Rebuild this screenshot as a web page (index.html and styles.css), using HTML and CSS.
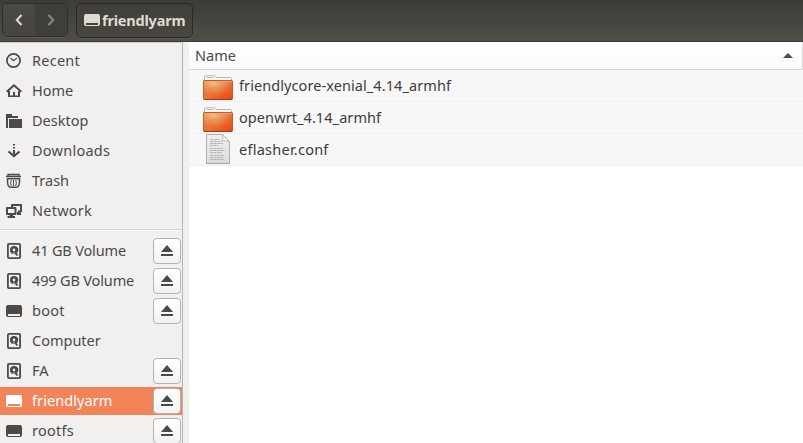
FILE: index.html
```html
<!DOCTYPE html>
<html lang="en">
<head>
<meta charset="utf-8">
<title>friendlyarm</title>
<link rel="stylesheet" href="styles.css">
</head>
<body>
<svg class="defs" aria-hidden="true">
  <defs>
    <linearGradient id="orange" x1="0" y1="0" x2="1" y2="1"><stop offset="0" stop-color="#d98743"/><stop offset=".5" stop-color="#e87436"/><stop offset="1" stop-color="#e64413"/></linearGradient>
    <radialGradient id="shine" cx=".35" cy=".1" r=".65"><stop offset="0" stop-color="#f0c488"/><stop offset="1" stop-color="#eca060" stop-opacity="0"/></radialGradient>
    <linearGradient id="paper" x1="0" y1="0" x2="0" y2="1"><stop offset="0" stop-color="#f0f0f0"/><stop offset="1" stop-color="#dcdcdc"/></linearGradient>
  </defs>
  <symbol id="recent" viewBox="0 0 16 16"><circle cx="7.5" cy="7.5" r="6.6" fill="none" stroke="currentColor" stroke-width="1.7"/><path d="M4.5 5l3 2.8L11 5" fill="none" stroke="currentColor" stroke-width="1.2"/></symbol>
  <symbol id="home" viewBox="0 0 16 16"><path d="M.7 8.7L8 2.2l7.3 6.5" fill="none" stroke="currentColor" stroke-width="1.9"/><path d="M2 8h2v4.5h3V9h2v3.500h3V8h2v6H2z" fill="currentColor"/></symbol>
  <symbol id="desktop" viewBox="0 0 16 16"><path d="M0 1h6v2h6v2H2v10H0zM3 6h13v9H3z" fill="currentColor"/></symbol>
  <symbol id="downloads" viewBox="0 0 16 16"><path d="M7 1h2v1.500H7zM7 4h2v1.500H7zM7 7h2v4.500H7z" fill="currentColor"/><path d="M2.500 8.500l5.500 4.500 5.500-4.500" fill="none" stroke="currentColor" stroke-width="2.200"/></symbol>
  <symbol id="trash" viewBox="0 0 16 16"><path d="M2 3.500V1.500h11v2M0 3.500h15" fill="none" stroke="currentColor" stroke-width="1.400"/><path d="M1 5.700h13M1.500 5.500v3.500q.2 5 3 5.300h6q2.800-.3 3-5.300V5.500" fill="none" stroke="currentColor" stroke-width="1.500"/><path d="M5.300 7q-1.300 3 0 6M9.700 7q1.300 3 0 6M7.500 7v6" fill="none" stroke="currentColor" stroke-width="1"/></symbol>
  <symbol id="network" viewBox="0 0 16 16"><path d="M6 4V1.900h9v6.500h-3M1 5h8.500v6H1z" fill="none" stroke="currentColor" stroke-width="2" stroke-linejoin="round"/><path d="M3.500 11h3.500v2h2v2H1.500v-2h2zM11 9h3v1h1v2h-4z" fill="currentColor"/></symbol>
  <symbol id="disk" viewBox="0 0 16 16"><rect x="1.900" y=".9" width="12.200" height="14.200" rx="1" fill="none" stroke="currentColor" stroke-width="1.800"/><path fill-rule="evenodd" d="M8 3a4 4 0 1 0 0 8l-.8-2h.8l2 2 1.500-1.500A4 4 0 0 0 8 3zM8 5.600a1.300 1.300 0 1 0 0 2.600 1.300 1.300 0 0 0 0-2.600z" fill="currentColor"/><path d="M8.800 9.300l2.700 3.200" stroke="currentColor" stroke-width="1.900"/></symbol>
  <symbol id="drive" viewBox="0 0 16 16"><path fill-rule="evenodd" d="M2 2h12q2 0 2 2v8q0 2-2 2H2q-2 0-2-2V4q0-2 2-2zM2 11v2h12v-2z" fill="currentColor"/></symbol>
  <symbol id="eject" viewBox="0 0 12 12"><path d="M6 0l6 7H0zM0 9h12v2H0z" fill="currentColor"/></symbol>
  <symbol id="folder" viewBox="0 0 30 25"><path d="M1.500 7V1.500q0-.8 1-.8h9q.8 0 1.500 1.800h14.500q1 0 1 1V7" fill="#f8f8f8" stroke="#b9b9b9"/><path d="M3.500 2.500h7" stroke="#f3a474"/><rect x=".5" y="5.500" width="29" height="19" rx=".7" fill="url(#orange)"/><rect x=".5" y="5.500" width="29" height="19" rx=".7" fill="url(#shine)" stroke="#c85a2c"/><path d="M1.500 6.500h27" stroke="#efaa7b"/><path d="M1 24.500h28" stroke="#a9340f"/></symbol>
  <symbol id="file" viewBox="0 0 24 31"><path d="M.5.5h16l7 7v22H.5z" fill="url(#paper)" stroke="#b0b0b0"/><path d="M16.500.5q1.500 4-1 6.500 4-1 8 1z" fill="#fafafa" stroke="#b0b0b0" stroke-width=".8"/><path d="M4 5.500h9M4 7.500h11M4 9.500h13M4 11.500h8M4 14.500h13M4 16.500h15M4 18.500h12M4 21.500h14M4 23.500h13M4 25.500h14" stroke="#b5b5b5" stroke-dasharray="3 .6"/><path d="M0 29.500h24" stroke="#a2a2a2"/></symbol>
</svg>

<header class="toolbar">
  <div class="nav">
    <button class="nav-btn" aria-label="Back"><svg width="8" height="12" viewBox="0 0 8 12"><path d="M6.500 1L1.800 6l4.700 5" fill="none" stroke="currentColor" stroke-width="2"/></svg></button>
    <button class="nav-btn forward" aria-label="Forward"><svg width="8" height="12" viewBox="0 0 8 12"><path d="M1.500 1l4.700 5-4.700 5" fill="none" stroke="currentColor" stroke-width="2"/></svg></button>
  </div>
  <button class="path"><svg width="16" height="16"><use href="#drive"/></svg><span class="path-name">friendlyarm</span></button>
</header>

<div class="main">
  <nav class="sidebar">
    <div class="item"><svg class="icon"><use href="#recent"/></svg><span class="wide">Recent</span></div>
    <div class="item"><svg class="icon"><use href="#home"/></svg><span>Home</span></div>
    <div class="item"><svg class="icon"><use href="#desktop"/></svg><span>Desktop</span></div>
    <div class="item"><svg class="icon"><use href="#downloads"/></svg><span class="wide">Downloads</span></div>
    <div class="item"><svg class="icon"><use href="#trash"/></svg><span>Trash</span></div>
    <div class="item"><svg class="icon"><use href="#network"/></svg><span class="wide">Network</span></div>
    <div class="separator"></div>
    <div class="item"><svg class="icon"><use href="#disk"/></svg><span class="tight">41 GB Volume</span><button class="eject" aria-label="Eject"><svg width="12" height="12"><use href="#eject"/></svg></button></div>
    <div class="item"><svg class="icon"><use href="#disk"/></svg><span class="tight">499 GB Volume</span><button class="eject" aria-label="Eject"><svg width="12" height="12"><use href="#eject"/></svg></button></div>
    <div class="item"><svg class="icon"><use href="#drive"/></svg><span class="wide">boot</span><button class="eject" aria-label="Eject"><svg width="12" height="12"><use href="#eject"/></svg></button></div>
    <div class="item"><svg class="icon"><use href="#disk"/></svg><span>Computer</span></div>
    <div class="item"><svg class="icon"><use href="#disk"/></svg><span>FA</span><button class="eject" aria-label="Eject"><svg width="12" height="12"><use href="#eject"/></svg></button></div>
    <div class="item selected"><svg class="icon"><use href="#drive"/></svg><span class="slight">friendlyarm</span><button class="eject" aria-label="Eject"><svg width="12" height="12"><use href="#eject"/></svg></button></div>
    <div class="item"><svg class="icon"><use href="#drive"/></svg><span class="wide">rootfs</span><button class="eject" aria-label="Eject"><svg width="12" height="12"><use href="#eject"/></svg></button></div>
  </nav>
  <section class="files">
    <div class="columns"><span>Name</span><svg width="10" height="5" viewBox="0 0 10 5"><path d="M5 0l5 5H0z" fill="#4c4c4c"/></svg></div>
    <div class="row"><svg class="folder"><use href="#folder"/></svg><span class="slight">friendlycore-xenial_4.14_armhf</span></div>
    <div class="row"><svg class="folder"><use href="#folder"/></svg><span class="slight">openwrt_4.14_armhf</span></div>
    <div class="row"><svg class="file"><use href="#file"/></svg><span class="wide">eflasher.conf</span></div>
  </section>
</div>
</body>
</html>
```
FILE: styles.css
```css
* { box-sizing: border-box; }
body {
  margin: 0;
  width: 803px;
  height: 443px;
  overflow: hidden;
  background: #fff;
  color: #4a4a4a;
  font: 14.5px/20px "Noto Sans", "Open Sans", sans-serif;
}
.defs { position: absolute; width: 0; height: 0; }
button { padding: 0; font: inherit; color: inherit; }
svg { display: block; flex: none; }
span { white-space: nowrap; padding-bottom: 2px; }
.wide { letter-spacing: 0.25px; }
.slight { letter-spacing: 0.08px; }
.tight { letter-spacing: -0.15px; }

.toolbar {
  display: flex;
  align-items: flex-start;
  gap: 8px;
  height: 42px;
  padding: 3px 2px 0;
  background: linear-gradient(#3c3b37, #504e47);
  border-bottom: 1px solid #3d3b37;
  color: #dfdbd2;
}
.nav {
  display: flex;
  width: 66px;
  height: 34px;
  border: 1px solid #2f2e2b;
  border-radius: 5px;
  overflow: hidden;
  box-shadow: 0 1px 0 #5c5a53, inset 0 1px 0 #55534c;
}
.nav-btn {
  display: flex;
  align-items: center;
  justify-content: center;
  width: 32px;
  border: 0;
  background: linear-gradient(#4a4943, #454440);
}
.nav-btn.forward { background: #3f3e3a; color: #8b8881; }
.path {
  display: flex;
  align-items: center;
  gap: 2px;
  width: 117px;
  height: 35px;
  padding: 0 0 0 7px;
  border: 1px solid #2b2a27;
  border-radius: 5px;
  background: linear-gradient(#403f3a, #474640);
  box-shadow: 0 1px 0 #5c5a53;
  font-weight: bold;
}
.path svg { margin-bottom: 2px; }
.path-name { letter-spacing: -0.2px; }

.main { display: flex; height: 401px; }
.sidebar {
  width: 183px;
  height: 401px;
  padding-top: 4px;
  border-top: 1px solid #d0cecb;
  border-right: 1px solid #b8b5b1;
  background: #f1f0ee;
  overflow: hidden;
}
.item {
  display: flex;
  align-items: center;
  gap: 10px;
  height: 28px;
  margin-bottom: 2px;
  padding: 0 1px 0 6px;
}
.icon { width: 16px; height: 16px; }
.selected { background: #f2845a; color: #fff; }
.separator { height: 2px; margin: 3px 0 7px; border-top: 1px solid #d8d6d3; border-bottom: 1px solid #fafafa; }
.separator { position: relative; top: 1px; }
.eject {
  display: flex;
  align-items: center;
  justify-content: center;
  width: 28px;
  height: 26px;
  margin-left: auto;
  border: 1px solid #b5b3b0;
  border-radius: 4px;
  background: linear-gradient(#fff, #f2f2f2);
  color: #4a4a4a;
}

.files { flex: 1; border-left: 6px solid #f1f0ee; }
.columns {
  display: flex;
  align-items: center;
  justify-content: space-between;
  height: 28px;
  padding: 0 9px 0 6px;
  border-right: 1px solid #dcdcdc;
  border-bottom: 1px solid #d6d6d6;
  background: linear-gradient(#fff, #fafafa);
}
.row {
  display: flex;
  align-items: center;
  height: 32px;
  padding-left: 14px;
  background: #f7f7f7;
  border-bottom: 1px solid #efefef;
  color: #3c3c3c;
}
.folder { width: 30px; height: 25px; margin: 4px 6px 0 0; }
.file { width: 24px; height: 31px; margin: 0 9px 0 3px; }
```
